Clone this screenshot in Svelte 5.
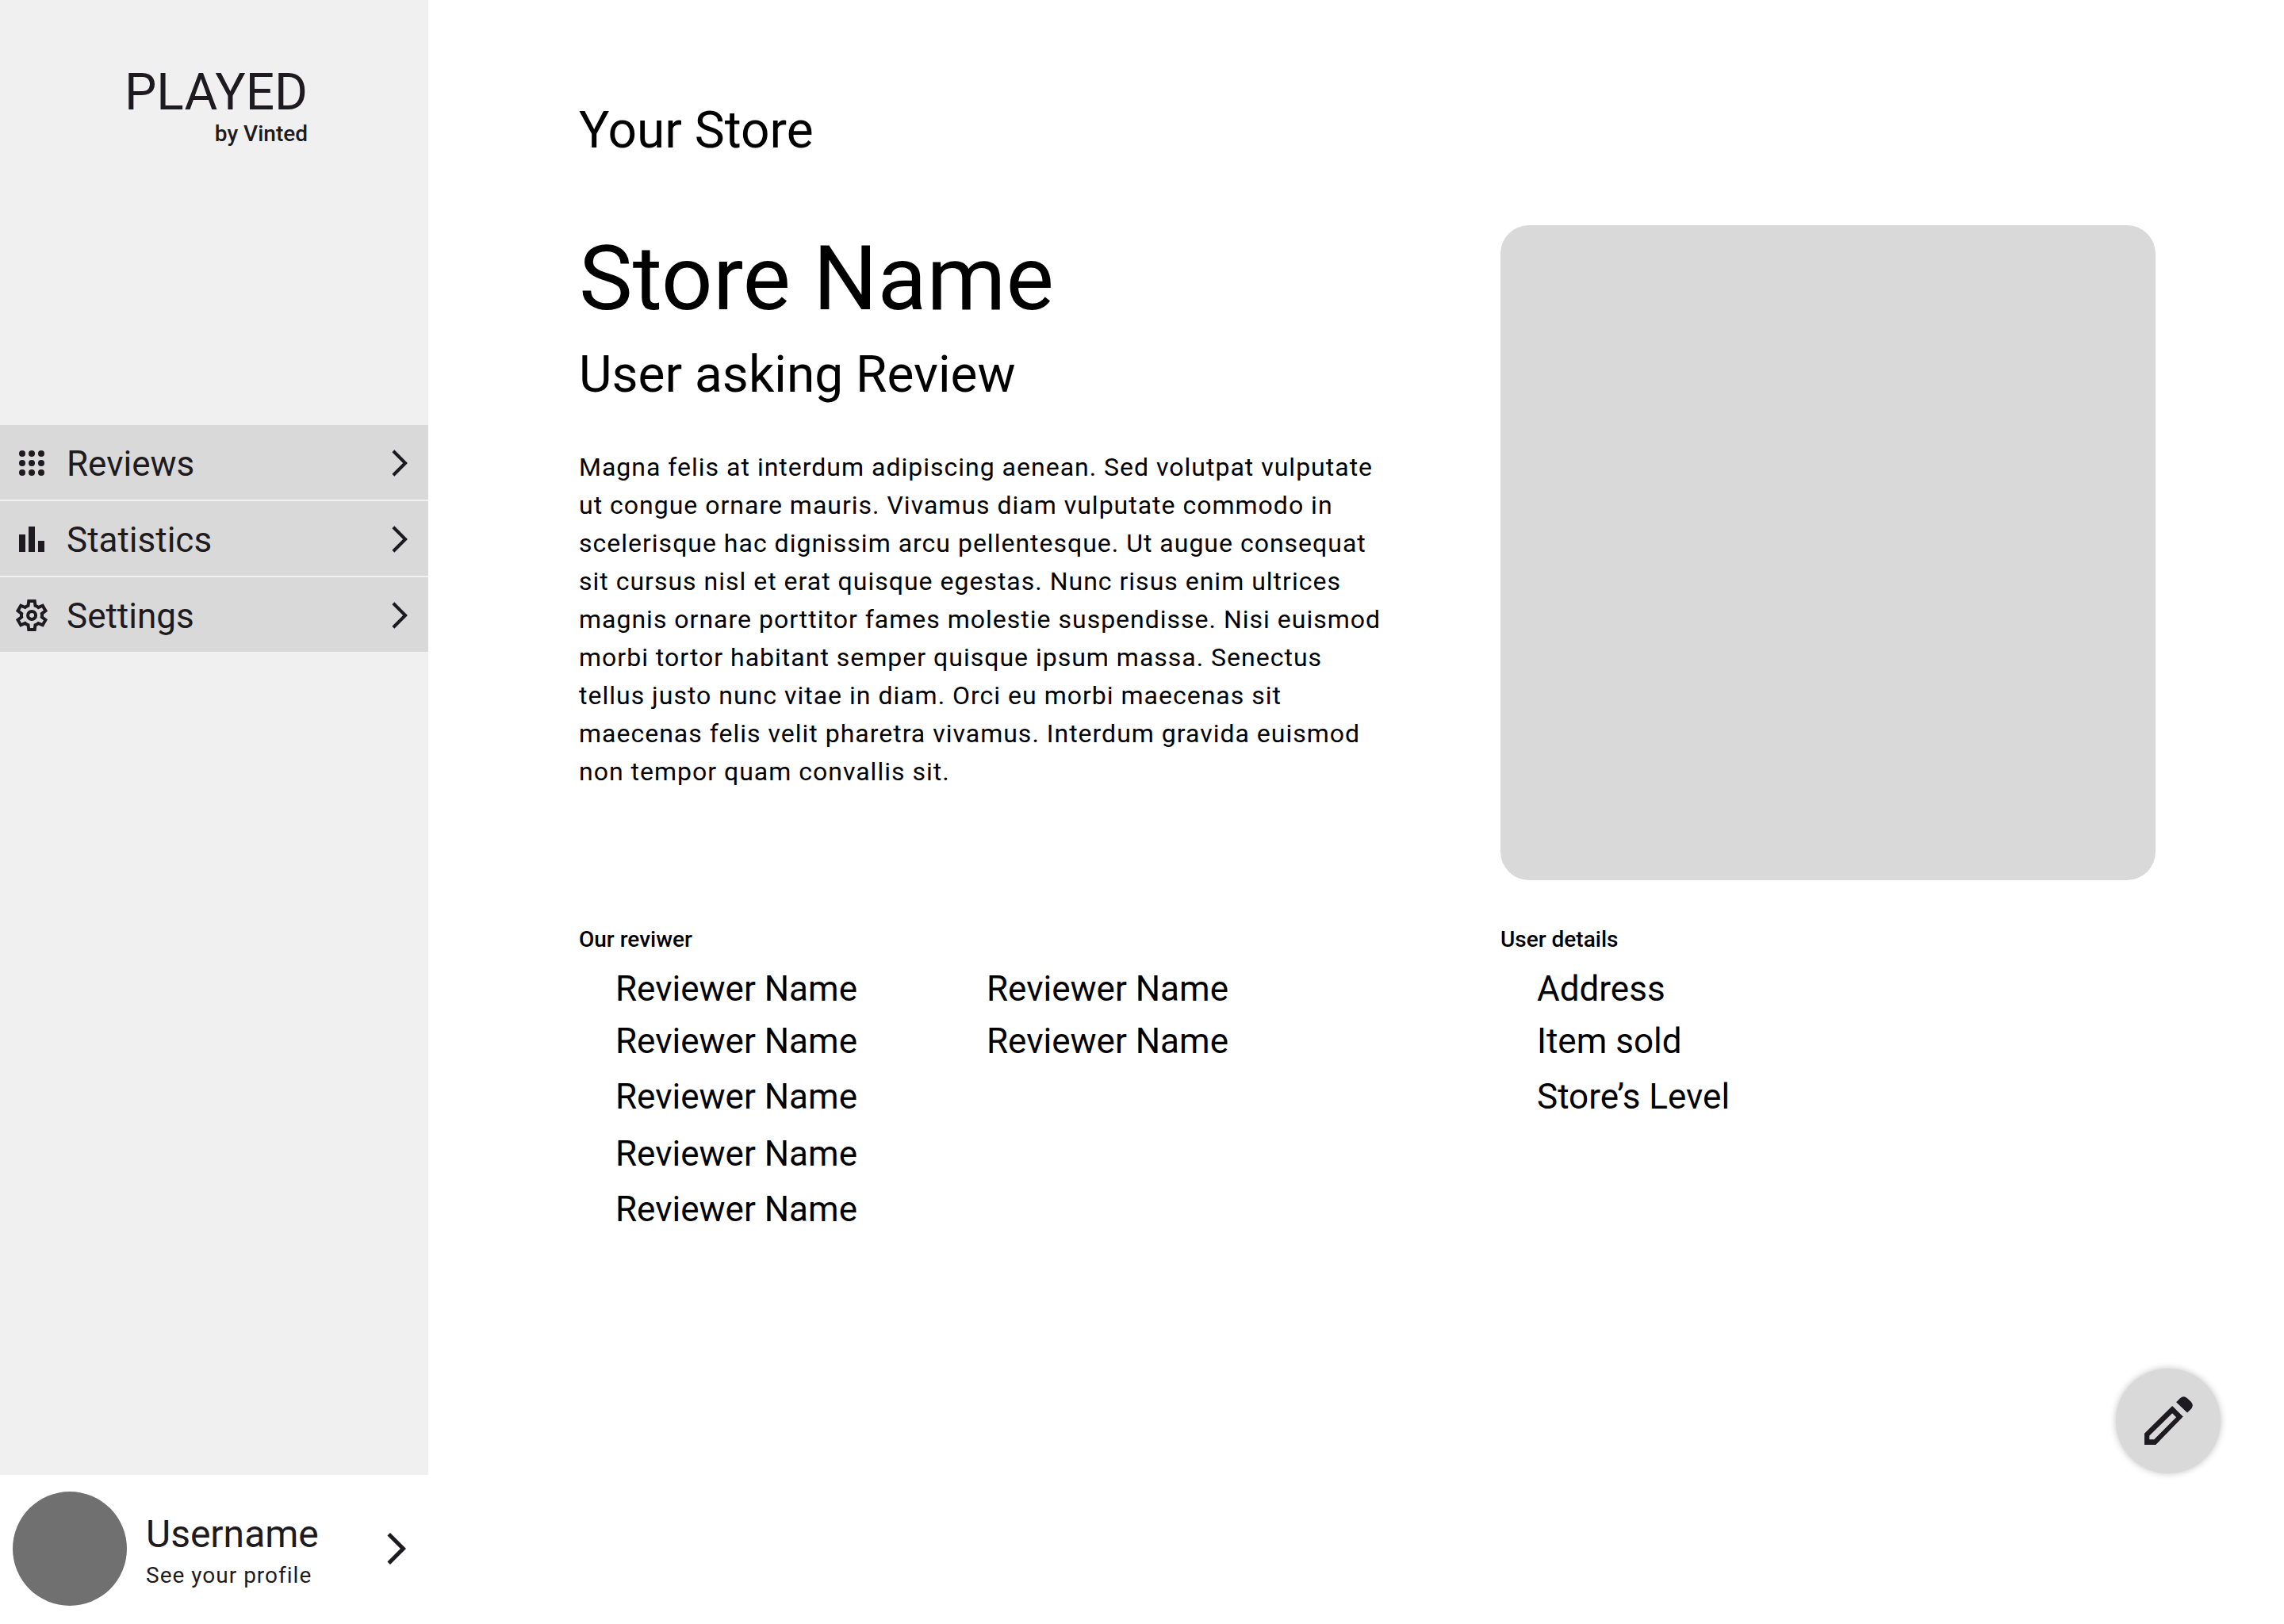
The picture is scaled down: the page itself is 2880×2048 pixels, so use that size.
<script>
  const menu = [
    { id: 'reviews', label: 'Reviews' },
    { id: 'statistics', label: 'Statistics' },
    { id: 'settings', label: 'Settings' }
  ];
  const reviewers = Array.from({ length: 7 }, () => 'Reviewer Name');
  const details = ['Address', 'Item sold', 'Store’s Level'];
  const dots = [6, 12, 18];
</script>

{#snippet chevron(size)}
  <svg class="chevron {size}" viewBox="0 0 24 24" aria-hidden="true">
    <path d="M6.23 20.23 8 22l10-10L8 2 6.23 3.77 14.46 12z" />
  </svg>
{/snippet}

<div class="page">
  <aside class="sidebar">
    <div class="brand">
      <span class="brand-name">PLAYED</span>
      <span class="brand-by">by Vinted</span>
    </div>

    <nav class="menu" aria-label="Main">
      {#each menu as item (item.id)}
        <a class="menu-item" href="#{item.id}">
          <svg class="menu-icon" viewBox="0 0 24 24" aria-hidden="true">
            {#if item.id === 'reviews'}
              {#each dots as cy}
                {#each dots as cx}
                  <circle {cx} {cy} r="2" />
                {/each}
              {/each}
            {:else if item.id === 'statistics'}
              <path d="M4 9h4v11H4zM10 4h4v16h-4zM16 13h4v7h-4z" />
            {:else}
              <path
                fill-rule="evenodd"
                transform="translate(0 24) scale(0.025)"
                d="m370-80-16-128q-13-5-24.500-12T307-235l-119 50L78-375l103-78q-1-7-1-13.500v-27q0-6.500 1-13.500L78-585l110-190 119 50q11-8 23-15t24-12l16-128h220l16 128q13 5 24.500 12t22.500 15l119-50 110 190-103 78q1 7 1 13.500v27q0 6.500-2 13.500l103 78-110 190-118-50q-11 8-23 15t-24 12L590-80H370Zm70-80h79l14-106q31-8 57.500-23.500T639-327l99 41 39-68-86-65q5-14 7-29.500t2-31.500q0-16-2-31.500t-7-29.500l86-65-39-68-99 42q-22-23-48.500-38.500T533-694l-13-106h-79l-14 106q-31 8-57.500 23.500T321-633l-99-41-39 68 86 64q-5 15-7 30t-2 32q0 16 2 31t7 30l-86 65 39 68 99-42q22 23 48.500 38.500T427-266l13 106Zm42-180q58 0 99-41t41-99q0-58-41-99t-99-41q-59 0-99.500 41T342-480q0 58 40.500 99t99.500 41ZM482-420q-25 0-42.500-17.500T422-480q0-25 17.500-42.500T482-540q25 0 42.500 17.500T542-480q0 25-17.500 42.500T482-420Z"
              />
            {/if}
          </svg>
          <span class="menu-label">{item.label}</span>
          {@render chevron('small')}
        </a>
      {/each}
    </nav>

    <a class="profile" href="#profile">
      <span class="avatar"></span>
      <span class="profile-text">
        <span class="profile-name">Username</span>
        <span class="profile-hint">See your profile</span>
      </span>
      {@render chevron('large')}
    </a>
  </aside>

  <main class="content">
    <h1 class="page-title">Your Store</h1>

    <div class="columns">
      <section class="intro">
        <h2 class="store-name">Store Name</h2>
        <p class="subtitle">User asking Review</p>
        <p class="description">
          Magna felis at interdum adipiscing aenean. Sed volutpat vulputate ut congue ornare mauris.
          Vivamus diam vulputate commodo in scelerisque hac dignissim arcu pellentesque. Ut augue
          consequat sit cursus nisl et erat quisque egestas. Nunc risus enim ultrices magnis ornare
          porttitor fames molestie suspendisse. Nisi euismod morbi tortor habitant semper quisque
          ipsum massa. Senectus tellus justo nunc vitae in diam. Orci eu morbi maecenas sit maecenas
          felis velit pharetra vivamus. Interdum gravida euismod non tempor quam convallis sit.
        </p>
      </section>

      <div class="picture" role="img" aria-label="Store"></div>

      <section>
        <h3 class="list-title">Our reviwer</h3>
        <ul class="list reviewers">
          {#each reviewers as name}
            <li>{name}</li>
          {/each}
        </ul>
      </section>

      <section>
        <h3 class="list-title">User details</h3>
        <ul class="list">
          {#each details as detail}
            <li>{detail}</li>
          {/each}
        </ul>
      </section>
    </div>
  </main>

  <button class="edit" type="button" aria-label="Edit store">
    <svg class="edit-icon" viewBox="0 0 184 184" aria-hidden="true">
      <path
        fill-rule="evenodd"
        d="M0 184V141L106 36l41 41L43 184zM19 164h18l84-85-15-15L19 149z"
      />
      <path d="M121 22 136 7Q148-5 162 6L178 21Q189 34 177 48L163 62z" />
    </svg>
  </button>
</div>

<style>
  :global(body) {
    margin: 0;
    background: #ffffff;
  }

  .page {
    position: relative;
    display: grid;
    grid-template-columns: 540px minmax(0, 1fr);
    min-height: 100vh;
    font-family: Roboto, 'Liberation Sans', sans-serif;
    font-weight: 400;
    color: #000000;
  }

  h1,
  h2,
  h3,
  p,
  ul {
    margin: 0;
    padding: 0;
    font-weight: 400;
  }

  svg {
    flex: none;
    fill: #1d1b20;
  }

  .sidebar {
    display: flex;
    flex-direction: column;
    background: #f0f0f0;
    color: #1d1b20;
  }

  .brand {
    display: flex;
    flex-direction: column;
    align-items: flex-end;
    padding: 85px 152px 0 0;
  }

  .brand-name {
    font-size: 64px;
    line-height: 64px;
  }

  .brand-by {
    font-size: 28px;
    line-height: 40px;
    font-weight: 500;
  }

  .menu {
    display: flex;
    flex-direction: column;
    gap: 2px;
    margin-top: 347px;
  }

  .menu-item {
    display: flex;
    align-items: center;
    padding: 19px 16px 17px;
    background: #d9d9d9;
    color: inherit;
    text-decoration: none;
  }

  .menu-icon {
    width: 48px;
    height: 48px;
  }

  .menu-label {
    flex: 1;
    margin-left: 20px;
    padding-top: 2px;
    font-size: 44px;
    line-height: 56px;
  }

  .chevron.small {
    width: 40px;
    height: 40px;
  }

  .chevron.large {
    width: 48px;
    height: 48px;
  }

  .profile {
    display: flex;
    align-items: center;
    gap: 24px;
    margin-top: auto;
    padding: 21px 16px 23px;
    background: #ffffff;
    color: inherit;
    text-decoration: none;
  }

  .avatar {
    width: 144px;
    height: 144px;
    border-radius: 50%;
    background: #707070;
  }

  .profile-text {
    flex: 1;
    display: flex;
    flex-direction: column;
    padding-top: 4px;
  }

  .profile-name {
    font-size: 48px;
    line-height: 64px;
  }

  .profile-hint {
    font-size: 28px;
    line-height: 40px;
    letter-spacing: 1px;
  }

  .content {
    padding: 125px 162px 124px 190px;
  }

  .page-title {
    font-size: 64px;
    line-height: 80px;
  }

  .columns {
    display: grid;
    grid-template-columns: minmax(0, 1026fr) minmax(0, 826fr);
    column-gap: 136px;
    row-gap: 55px;
    margin-top: 79px;
  }

  .store-name {
    font-size: 114px;
    line-height: 134px;
  }

  .subtitle {
    margin-top: 15px;
    font-size: 64px;
    line-height: 80px;
  }

  .description {
    margin-top: 52px;
    font-size: 32px;
    line-height: 48px;
    letter-spacing: 1px;
  }

  .picture {
    aspect-ratio: 1;
    align-self: start;
    border-radius: 36px;
    background: #d9d9d9;
  }

  .list-title {
    font-size: 28px;
    line-height: 40px;
    font-weight: 500;
  }

  .list {
    display: grid;
    grid-template-rows: 66px 70px 72px 70px 56px;
    margin-top: 14px;
    padding-left: 46px;
    list-style: none;
    font-size: 44px;
    line-height: 56px;
  }

  .reviewers {
    grid-auto-flow: column;
    grid-auto-columns: minmax(0, 1fr);
    padding-right: 44px;
  }

  .edit {
    position: absolute;
    right: 80px;
    bottom: 190px;
    display: grid;
    place-items: center;
    width: 132px;
    height: 132px;
    padding: 0 0 2px;
    border: 0;
    border-radius: 50%;
    background: #d9d9d9;
    box-shadow: 0 0 8px rgba(0, 0, 0, 0.25);
    cursor: pointer;
  }

  .edit-icon {
    width: 61px;
    height: 61px;
  }
</style>
